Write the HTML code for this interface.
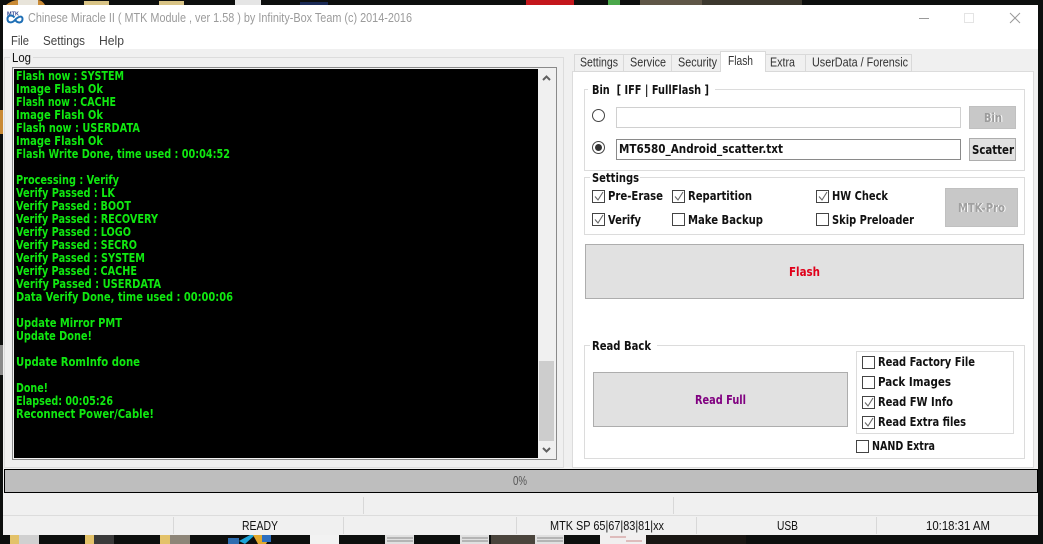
<!DOCTYPE html>
<html><head><meta charset="utf-8"><style>
html,body{margin:0;padding:0;background:#0b0b0b;width:1043px;height:544px;overflow:hidden}
svg{display:block}
text{font-family:"DejaVu Sans",sans-serif}
.l{font-weight:bold;font-size:12px;fill:#10e810}
.b{font-weight:bold;font-size:12px;fill:#111}
.r{font-family:"Liberation Sans",sans-serif;font-size:12.5px;fill:#222}
.t{font-family:"Liberation Sans",sans-serif;font-size:12.5px;fill:#333}
.m{font-family:"Liberation Sans",sans-serif;font-size:13px;fill:#444}
.c{fill:#fff;stroke:#444;stroke-width:1}
.k{fill:none;stroke:#666;stroke-width:1.1}
.g{fill:none;stroke:#dcdcdc;stroke-width:1}
</style></head><body>
<svg width="1043" height="544" viewBox="0 0 1043 544" xmlns="http://www.w3.org/2000/svg">
<rect width="1043" height="544" fill="#0d0f0e"/>
<!-- desktop top -->
<path d="M6 5 Q12 0 18 0 H38 Q42 0 45 5Z" fill="#c98a35"/><rect x="18" y="0" width="20" height="5" fill="#e8e4da"/>
<rect x="84" y="1" width="25" height="4" fill="#d9c486"/><rect x="159" y="1" width="25" height="4" fill="#d9c486"/>
<rect x="235" y="0" width="26" height="5" fill="#e5e5e5"/>
<rect x="300" y="2" width="28" height="3" fill="#1a2a55"/>
<rect x="526" y="0" width="48" height="5" fill="#c4161c"/>
<rect x="608" y="0" width="12" height="5" fill="#4aa84a"/>
<rect x="640" y="0" width="62" height="5" fill="#5f5647"/>
<rect x="702" y="0" width="100" height="5" fill="#3c382e"/>
<rect x="0" y="110" width="3" height="24" fill="#c98a35"/><rect x="0" y="345" width="3" height="30" fill="#8a8a8a"/>
<!-- desktop bottom -->
<rect x="10" y="535" width="9" height="9" fill="#e3c26a"/><rect x="19" y="535" width="20" height="9" fill="#d0d0d0"/>
<rect x="85" y="535" width="9" height="9" fill="#e3c26a"/><rect x="94" y="535" width="20" height="9" fill="#3a3a3a"/>
<rect x="160" y="535" width="10" height="9" fill="#e3c26a"/><rect x="170" y="535" width="20" height="9" fill="#8d8578"/>
<rect x="228" y="538" width="11" height="6" fill="#2e6db0"/><path d="M239 541 L250 535 H255 L245 544Z" fill="#1ca4d8"/>
<path d="M253 535 H271 L266 544 H258Z" fill="#e0a82e"/><rect x="262" y="535" width="9" height="7" fill="#2d6fc0"/>
<rect x="310" y="535" width="29" height="9" fill="#f2f2f2"/>
<rect x="385" y="535" width="29" height="9" fill="#e0e0e0"/><path d="M387 538H413M387 541H413" stroke="#888"/>
<rect x="460" y="535" width="29" height="9" fill="#e0e0e0"/><path d="M462 538H488M462 541H488" stroke="#888"/>
<rect x="491" y="535" width="44" height="9" fill="#4a443c"/><rect x="535" y="535" width="29" height="9" fill="#e0e0e0"/><path d="M537 538H563M537 541H563" stroke="#888"/>
<rect x="600" y="535" width="46" height="9" fill="#f1efef"/><path d="M610 537H626M626 541H642" stroke="#c88"/>
<rect x="646" y="535" width="100" height="9" fill="#191613"/>
<!-- window -->
<rect x="3" y="5" width="1035" height="530" fill="#f0f0f0"/>
<rect x="3" y="5" width="1035" height="44" fill="#ffffff"/>
<!-- app icon -->
<text x="7" y="15.5" style="font-family:'Liberation Sans',sans-serif;font-size:5.5px;font-weight:bold;fill:#2a3f8f">MTK</text>
<path d="M14.5 17.5 C12 14.5 7.5 15 7.5 19 C7.5 23 12 23.5 15 20 C18 16.5 22.5 15 22.5 19 C22.5 23 18 23.5 15.5 20.5" fill="none" stroke="#1f6fb5" stroke-width="2"/>
<text x="28" y="22" textLength="384" lengthAdjust="spacingAndGlyphs" style="font-family:'Liberation Sans',sans-serif;font-size:13px;fill:#9b9b9b">Chinese Miracle II ( MTK Module , ver 1.58 ) by Infinity-Box Team (c) 2014-2016</text>
<path d="M919 18.5H929" stroke="#9a9a9a"/><rect x="964.5" y="13.5" width="9" height="9" fill="none" stroke="#e4e4e4"/>
<path d="M1010 13L1020 23M1020 13L1010 23" stroke="#9a9a9a" fill="none"/>
<text class="m" x="11" y="45" textLength="18" lengthAdjust="spacingAndGlyphs">File</text>
<text class="m" x="43" y="45" textLength="42" lengthAdjust="spacingAndGlyphs">Settings</text>
<text class="m" x="99" y="45" textLength="25" lengthAdjust="spacingAndGlyphs">Help</text>
<!-- log group -->
<rect x="4.5" y="57.5" width="559" height="410" class="g"/>
<rect x="10" y="52" width="23" height="10" fill="#f0f0f0"/>
<text class="r" x="12" y="62" textLength="19" lengthAdjust="spacingAndGlyphs" style="fill:#111">Log</text>
<rect x="12.5" y="67.5" width="544" height="392" fill="#f0f0f0" stroke="#8a8a8a"/>
<rect x="14" y="69" width="524" height="389" fill="#000"/>
<rect x="539" y="361" width="15" height="80" fill="#cdcdcd"/>
<path d="M543 80L546.5 76.500L550 80" fill="none" stroke="#606060" stroke-width="2"/>
<path d="M543 448L546.500 451.500L550 448" fill="none" stroke="#606060" stroke-width="2"/>
<!-- log text -->
<text class="l" x="16" y="80" textLength="108" lengthAdjust="spacingAndGlyphs">Flash now : SYSTEM</text>
<text class="l" x="16" y="93" textLength="87" lengthAdjust="spacingAndGlyphs">Image Flash Ok</text>
<text class="l" x="16" y="106" textLength="100" lengthAdjust="spacingAndGlyphs">Flash now : CACHE</text>
<text class="l" x="16" y="119" textLength="87" lengthAdjust="spacingAndGlyphs">Image Flash Ok</text>
<text class="l" x="16" y="132" textLength="124" lengthAdjust="spacingAndGlyphs">Flash now : USERDATA</text>
<text class="l" x="16" y="145" textLength="87" lengthAdjust="spacingAndGlyphs">Image Flash Ok</text>
<text class="l" x="16" y="158" textLength="214" lengthAdjust="spacingAndGlyphs">Flash Write Done, time used : 00:04:52</text>
<text class="l" x="16" y="184" textLength="103" lengthAdjust="spacingAndGlyphs">Processing : Verify</text>
<text class="l" x="16" y="197" textLength="99" lengthAdjust="spacingAndGlyphs">Verify Passed : LK</text>
<text class="l" x="16" y="210" textLength="115" lengthAdjust="spacingAndGlyphs">Verify Passed : BOOT</text>
<text class="l" x="16" y="223" textLength="142" lengthAdjust="spacingAndGlyphs">Verify Passed : RECOVERY</text>
<text class="l" x="16" y="236" textLength="115" lengthAdjust="spacingAndGlyphs">Verify Passed : LOGO</text>
<text class="l" x="16" y="249" textLength="121" lengthAdjust="spacingAndGlyphs">Verify Passed : SECRO</text>
<text class="l" x="16" y="262" textLength="129" lengthAdjust="spacingAndGlyphs">Verify Passed : SYSTEM</text>
<text class="l" x="16" y="275" textLength="121" lengthAdjust="spacingAndGlyphs">Verify Passed : CACHE</text>
<text class="l" x="16" y="288" textLength="145" lengthAdjust="spacingAndGlyphs">Verify Passed : USERDATA</text>
<text class="l" x="16" y="301" textLength="217" lengthAdjust="spacingAndGlyphs">Data Verify Done, time used : 00:00:06</text>
<text class="l" x="16" y="327" textLength="106" lengthAdjust="spacingAndGlyphs">Update Mirror PMT</text>
<text class="l" x="16" y="340" textLength="76" lengthAdjust="spacingAndGlyphs">Update Done!</text>
<text class="l" x="16" y="366" textLength="124" lengthAdjust="spacingAndGlyphs">Update RomInfo done</text>
<text class="l" x="16" y="392" textLength="32" lengthAdjust="spacingAndGlyphs">Done!</text>
<text class="l" x="16" y="405" textLength="97" lengthAdjust="spacingAndGlyphs">Elapsed: 00:05:26</text>
<text class="l" x="16" y="418" textLength="138" lengthAdjust="spacingAndGlyphs">Reconnect Power/Cable!</text>
<!-- tabs -->
<rect x="572.500" y="71.500" width="461" height="396" fill="#fff" stroke="#dcdcdc"/>
<g fill="#f0f0f0" stroke="#d9d9d9">
<rect x="574.500" y="54.500" width="49" height="17"/>
<rect x="623.500" y="54.500" width="48" height="17"/>
<rect x="671.500" y="54.500" width="49" height="17"/>
<rect x="765.500" y="54.500" width="40" height="17"/>
<rect x="805.500" y="54.500" width="106" height="17"/>
</g>
<path d="M720.500 72V51.500H765.500V72" fill="#fff" stroke="#d9d9d9"/>
<rect x="721" y="70" width="44" height="3" fill="#fff"/>
<text class="t" x="580" y="66.500" textLength="38" lengthAdjust="spacingAndGlyphs">Settings</text>
<text class="t" x="630" y="66.500" textLength="36" lengthAdjust="spacingAndGlyphs">Service</text>
<text class="t" x="678" y="66.500" textLength="39" lengthAdjust="spacingAndGlyphs">Security</text>
<text class="t" x="728" y="65" textLength="25" lengthAdjust="spacingAndGlyphs">Flash</text>
<text class="t" x="770" y="66.500" textLength="25" lengthAdjust="spacingAndGlyphs">Extra</text>
<text class="t" x="812" y="66.500" textLength="96" lengthAdjust="spacingAndGlyphs">UserData / Forensic</text>
<!-- bin group -->
<rect x="584.500" y="89.500" width="440" height="81" class="g"/>
<rect x="588" y="84" width="127" height="11" fill="#fff"/>
<text class="b" x="592" y="94" textLength="117" lengthAdjust="spacingAndGlyphs" xml:space="preserve">Bin  [ IFF | FullFlash ]</text>
<circle cx="598.500" cy="115.500" r="6" fill="#fff" stroke="#444"/>
<circle cx="598.500" cy="147.500" r="6" fill="#fff" stroke="#444"/>
<circle cx="598.500" cy="147.500" r="3.500" fill="#333"/>
<rect x="616.500" y="107.500" width="344" height="20" fill="#fff" stroke="#d0d0d0"/>
<rect x="616.500" y="139.500" width="344" height="20" fill="#fff" stroke="#8a8a8a"/>
<text class="b" x="619" y="153" textLength="164" lengthAdjust="spacingAndGlyphs">MT6580_Android_scatter.txt</text>
<rect x="969.500" y="106.500" width="46" height="22" fill="#c8c8c8" stroke="#c0c0c0"/>
<text class="b" x="985" y="122" textLength="18" lengthAdjust="spacingAndGlyphs" style="fill:#fff">Bin</text>
<text class="b" x="984" y="122" textLength="18" lengthAdjust="spacingAndGlyphs" style="fill:#9c9c9c">Bin</text>
<rect x="969.500" y="138.500" width="46" height="22" fill="#e1e1e1" stroke="#adadad"/>
<text class="b" x="972" y="154" textLength="42" lengthAdjust="spacingAndGlyphs">Scatter</text>
<!-- settings group -->
<rect x="584.500" y="177.500" width="440" height="57" class="g"/>
<rect x="590" y="172" width="50" height="11" fill="#fff"/>
<text class="b" x="592" y="182" textLength="47" lengthAdjust="spacingAndGlyphs">Settings</text>
<rect class="c" x="592.500" y="190.500" width="12" height="12"/><path class="k" d="M595 196.500L598 200L603 192"/>
<text class="b" x="608" y="200" textLength="55" lengthAdjust="spacingAndGlyphs">Pre-Erase</text>
<rect class="c" x="672.500" y="190.500" width="12" height="12"/><path class="k" d="M675 196.500L678 200L683 192"/>
<text class="b" x="688" y="200" textLength="64" lengthAdjust="spacingAndGlyphs">Repartition</text>
<rect class="c" x="816.500" y="190.500" width="12" height="12"/><path class="k" d="M819 196.500L822 200L827 192"/>
<text class="b" x="832" y="200" textLength="56" lengthAdjust="spacingAndGlyphs">HW Check</text>
<rect class="c" x="592.500" y="213.500" width="12" height="12"/><path class="k" d="M595 219.500L598 223L603 215"/>
<text class="b" x="608" y="224" textLength="33" lengthAdjust="spacingAndGlyphs">Verify</text>
<rect class="c" x="672.500" y="213.500" width="12" height="12"/>
<text class="b" x="688" y="224" textLength="75" lengthAdjust="spacingAndGlyphs">Make Backup</text>
<rect class="c" x="816.500" y="213.500" width="12" height="12"/>
<text class="b" x="832" y="224" textLength="82" lengthAdjust="spacingAndGlyphs">Skip Preloader</text>
<rect x="945.500" y="188.500" width="72" height="38" fill="#c8c8c8" stroke="#c0c0c0"/>
<text class="b" x="959" y="212" textLength="47" lengthAdjust="spacingAndGlyphs" style="fill:#fff">MTK-Pro</text>
<text class="b" x="958" y="212" textLength="47" lengthAdjust="spacingAndGlyphs" style="fill:#a0a0a0">MTK-Pro</text>
<!-- flash -->
<rect x="585.500" y="244.500" width="438" height="54" fill="#e1e1e1" stroke="#adadad"/>
<text class="b" x="789" y="276" textLength="31" lengthAdjust="spacingAndGlyphs" style="fill:#e0001a">Flash</text>
<!-- read back -->
<rect x="584.500" y="345.500" width="440" height="113" class="g"/>
<rect x="590" y="340" width="67" height="11" fill="#fff"/>
<text class="b" x="592" y="350" textLength="59" lengthAdjust="spacingAndGlyphs">Read Back</text>
<rect x="593.500" y="372.500" width="254" height="54" fill="#e1e1e1" stroke="#adadad"/>
<text class="b" x="695" y="404" textLength="51" lengthAdjust="spacingAndGlyphs" style="fill:#800080">Read Full</text>
<rect x="856.500" y="351.500" width="157" height="82" class="g"/>
<rect class="c" x="862.500" y="356.500" width="12" height="12"/>
<text class="b" x="878" y="366" textLength="97" lengthAdjust="spacingAndGlyphs">Read Factory File</text>
<rect class="c" x="862.500" y="376.500" width="12" height="12"/>
<text class="b" x="878" y="386" textLength="73" lengthAdjust="spacingAndGlyphs">Pack Images</text>
<rect class="c" x="862.500" y="396.500" width="12" height="12"/><path class="k" d="M865 402.500L868 406L873 398"/>
<text class="b" x="878" y="406" textLength="75" lengthAdjust="spacingAndGlyphs">Read FW Info</text>
<rect class="c" x="862.500" y="416.500" width="12" height="12"/><path class="k" d="M865 422.500L868 426L873 418"/>
<text class="b" x="878" y="426" textLength="88" lengthAdjust="spacingAndGlyphs">Read Extra files</text>
<rect class="c" x="856.500" y="440.500" width="12" height="12"/>
<text class="b" x="872" y="450" textLength="63" lengthAdjust="spacingAndGlyphs">NAND Extra</text>
<!-- progress -->
<rect x="4.500" y="469.500" width="1033" height="23" fill="#bebebe" stroke="#000"/>
<text class="r" x="513" y="485" textLength="14" lengthAdjust="spacingAndGlyphs" style="fill:#555">0%</text>
<!-- status -->
<path d="M3 515.500H1038" stroke="#dcdcdc"/>
<path d="M363.500 497V514M673.500 497V514M173.500 517V534M343.500 517V534M516.500 517V534M696.500 517V534M876.500 517V534" stroke="#d8d8d8"/>
<text class="r" x="242" y="530" textLength="36" lengthAdjust="spacingAndGlyphs" style="fill:#111">READY</text>
<text class="r" x="550" y="530" textLength="114" lengthAdjust="spacingAndGlyphs" style="fill:#111">MTK SP 65|67|83|81|xx</text>
<text class="r" x="777" y="530" textLength="21" lengthAdjust="spacingAndGlyphs" style="fill:#111">USB</text>
<text class="r" x="926" y="530" textLength="64" lengthAdjust="spacingAndGlyphs" style="fill:#111">10:18:31 AM</text>
</svg>
</body></html>
